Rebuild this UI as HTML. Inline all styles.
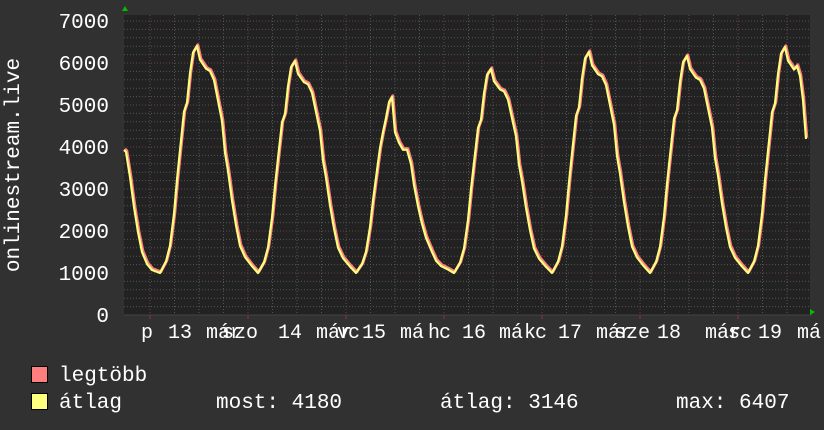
<!DOCTYPE html>
<html><head><meta charset="utf-8"><style>
html,body{margin:0;padding:0;background:#313131;}
svg{display:block}
text{font-family:"Liberation Mono","DejaVu Sans Mono",monospace;fill:#fff;}
</style></head><body>
<svg width="824" height="430" viewBox="0 0 824 430" xmlns="http://www.w3.org/2000/svg">
<rect width="824" height="430" fill="#313131"/>
<rect x="124" y="15" width="686" height="300" fill="#222222"/>
<g stroke="#555" stroke-width="1" stroke-dasharray="1,2">
<path d="M124 306.6H810M124 298.2H810M124 289.8H810M124 281.4H810M124 264.6H810M124 256.2H810M124 247.8H810M124 239.4H810M124 222.6H810M124 214.2H810M124 205.8H810M124 197.4H810M124 180.6H810M124 172.2H810M124 163.8H810M124 155.4H810M124 138.6H810M124 130.2H810M124 121.8H810M124 113.4H810M124 96.6H810M124 88.2H810M124 79.8H810M124 71.4H810M124 54.6H810M124 46.2H810M124 37.8H810M124 29.4H810"/>
<path d="M174.5 15V315M199 15V315M223.5 15V315M272.5 15V315M297 15V315M321.5 15V315M370.5 15V315M395 15V315M419.5 15V315M468.5 15V315M493 15V315M517.5 15V315M566.5 15V315M591 15V315M615.5 15V315M664.5 15V315M689 15V315M713.5 15V315M762.5 15V315M787 15V315"/>
</g>
<g stroke="#6a4646" stroke-width="1" stroke-dasharray="1,2">
<path d="M124 273H810M124 231H810M124 189H810M124 147H810M124 105H810M124 63H810M124 21H810"/>
<path d="M150 15V315M248 15V315M346 15V315M444 15V315M542 15V315M640 15V315M738 15V315"/>
</g>
<g stroke="#a03030" stroke-width="1"><path d="M150 315v4M248 315v4M346 315v4M444 315v4M542 315v4M640 315v4M738 315v4"/></g>
<path d="M124 315H812" stroke="#444" stroke-width="1"/>
<path d="M122 11l3-5 3 5z" fill="#00c000"/>
<path d="M810 309l5 3-5 3z" fill="#00c000"/>
<g fill="none" stroke-linejoin="round">
<polyline id="pk" stroke="#ff7f7f" stroke-width="3" transform="translate(0.8,-1.2)" points=""/>
<polyline id="yl" stroke="#ffff7f" stroke-width="2.2" points=""/>
</g>
<g font-size="21" text-anchor="end">
<text x="109" y="28">7000</text><text x="109" y="70">6000</text><text x="109" y="112">5000</text><text x="109" y="154">4000</text><text x="109" y="196">3000</text><text x="109" y="238">2000</text><text x="109" y="280">1000</text><text x="109" y="322">0</text>
</g>
<text font-size="21" transform="translate(19,165) rotate(-90)" text-anchor="middle">onlinestream.live</text>
<g font-size="20">
<text x="141" y="338">p</text><text x="168" y="338">13</text><text x="206" y="338">már</text><text x="222" y="338">szo</text>
<text x="278" y="338">14</text><text x="316" y="338">már</text><text x="337" y="338">v</text><text x="348" y="338">c</text><text x="362" y="338">15</text>
<text x="400" y="338">má</text><text x="428" y="338">h</text><text x="439" y="338">c</text>
<text x="462" y="338">16</text><text x="499" y="338">má</text><text x="524" y="338">k</text><text x="535" y="338">c</text><text x="558" y="338">17</text>
<text x="596" y="338">már</text><text x="614" y="338">sze</text><text x="657" y="338">18</text>
<text x="705" y="338">már</text><text x="728" y="338">sc</text><text x="758" y="338">19</text><text x="797" y="338">má</text>
</g>
<rect x="31.5" y="366.5" width="16" height="16" fill="#ff7f7f" stroke="#000"/>
<rect x="31.5" y="393.5" width="16" height="16" fill="#ffff7f" stroke="#000"/>
<g font-size="21">
<text x="59" y="381">legtöbb</text>
<text x="59" y="408">átlag</text>
<text x="216" y="408">most: 4180</text>
<text x="440" y="408">átlag: 3146</text>
<text x="676" y="408">max: 6407</text>
</g>
</svg>
<script>
(function(){
var pts=[[124,150],[126,152],[130,177],[134,207],[138,232],[142,252],[147,264],[152,270]];
var T=[[0,0],[6,.05],[10,.12],[14,.26],[17,.41],[20,.54],[24,.71],[27,.75],[30,.88],[33,.97],[37,1],[40,.94],[43,.92],[46,.90],[50,.89],[54,.85],[58,.76],[62,.67],[65,.53],[68,.45],[72,.32],[76,.21],[80,.12],[85,.07],[92,.03]];
var T2=[[0,0],[6,.05],[10,.12],[14,.26],[17,.41],[20,.54],[24,.71],[27,.80],[30,.88],[33,.97],[36,1],[39,.80],[43,.74],[47,.70],[51,.70],[55,.62],[58,.50],[62,.38],[66,.28],[70,.20],[76,.12],[80,.07],[85,.04],[92,.02]];
var peaks=[46,61,97,69,52,56,47];
for(var d=0;d<7;d++){
 var m=160+98*d, A=273-peaks[d], t=(d==2?T2:T);
 for(var i=0;i<t.length;i++){
  if(d==6 && t[i][0]>46) break;
  pts.push([m+t[i][0],273-t[i][1]*A]);
 }
}
pts.push([797,66],[800,76],[803,100],[806,139]);
var s=pts.map(function(p){return p[0]+','+p[1].toFixed(1)}).join(' ');
document.getElementById('pk').setAttribute('points',s);
document.getElementById('yl').setAttribute('points',s);
})();
</script>
</body></html>
